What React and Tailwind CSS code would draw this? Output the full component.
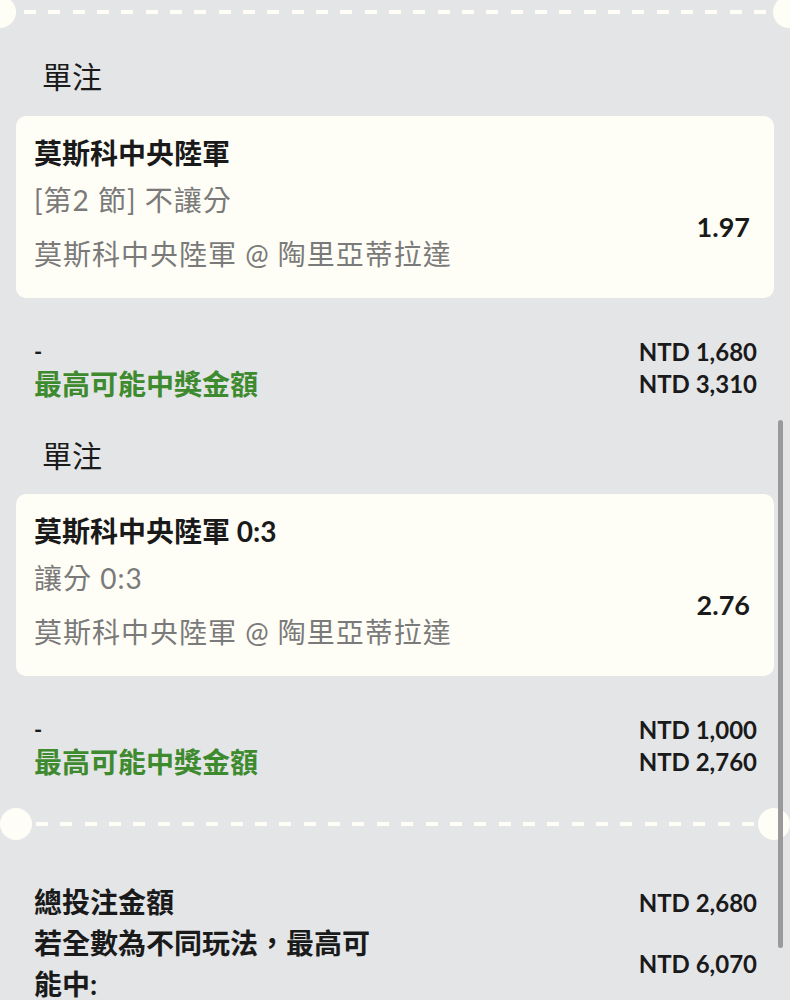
import React from "react";

function Dashes({ count }) {
  return (
    <div className="flex w-full justify-between">
      {Array.from({ length: count }).map((_, i) => (
        <span key={i} className="block h-[4px] w-[12px] bg-[#fffef6]" />
      ))}
    </div>
  );
}

function Card({ title, line2, line3, odds }) {
  return (
    <div className="mx-4 h-[182px] rounded-[10px] bg-[#fffef6] pl-[18px] pr-[24px] pt-[19px]">
      <div className="text-[28px] font-bold leading-[36px] text-[#1a1a1a]">{title}</div>
      <div className="mt-[11px] flex items-center justify-between">
        <div className="flex flex-col text-[28px] leading-[36px] tracking-[1px] text-[#7a7a7a]">
          <div>{line2}</div>
          <div className="mt-[18px]">{line3}</div>
        </div>
        <div className="text-[27px] font-bold text-[#1a1a1a]">{odds}</div>
      </div>
    </div>
  );
}

function Summary({ stake, win }) {
  return (
    <div className="mt-[38px] flex justify-between pl-[34px] pr-[33px]">
      <div className="flex flex-col">
        <div className="h-[32px] text-[22px] font-bold leading-[32px] text-[#1a1a1a]">-</div>
        <div className="h-[32px] text-[28px] font-bold leading-[32px] text-[#3e8a2e]">最高可能中獎金額</div>
      </div>
      <div className="flex flex-col items-end text-[24px] font-bold text-[#1a1a1a]">
        <div className="leading-[32px]">{stake}</div>
        <div className="leading-[32px]">{win}</div>
      </div>
    </div>
  );
}

function Heading() {
  return <div className="pl-[42px] text-[30px] leading-[40px] text-[#1a1a1a]">單注</div>;
}

export default function App() {
  return (
    <div className="relative h-[1000px] w-full overflow-hidden bg-[#e4e5e7] font-['Lato','Noto_Sans_CJK_TC',sans-serif]">
      {/* top separator */}
      <div className="relative flex h-[24px] items-center pl-[24px] pr-[24px]">
        <span className="absolute left-[-16px] top-[-4px] h-[32px] w-[32px] rounded-full bg-[#fffef6]" />
        <span className="absolute left-[773px] top-[-4px] h-[32px] w-[32px] rounded-full bg-[#fffef6]" />
        <Dashes count={31} />
      </div>

      <div className="mt-[32px]">
        <Heading />
      </div>
      <div className="mt-[20px]">
        <Card title="莫斯科中央陸軍" line2="[第2 節] 不讓分" line3="莫斯科中央陸軍 @ 陶里亞蒂拉達" odds="1.97" />
      </div>
      <Summary stake="NTD 1,680" win="NTD 3,310" />

      <div className="mt-[35px]">
        <Heading />
      </div>
      <div className="mt-[19px]">
        <Card title="莫斯科中央陸軍 0:3" line2="讓分 0:3" line3="莫斯科中央陸軍 @ 陶里亞蒂拉達" odds="2.76" />
      </div>
      <Summary stake="NTD 1,000" win="NTD 2,760" />

      {/* bottom separator */}
      <div className="mt-[30px] flex h-[32px] items-center">
        <span className="h-[32px] w-[32px] shrink-0 rounded-full bg-[#fffef6]" />
        <div className="flex-1 px-[4px]">
          <Dashes count={30} />
        </div>
        <span className="h-[32px] w-[32px] shrink-0 rounded-full bg-[#fffef6]" />
      </div>

      {/* totals */}
      <div className="mt-[42px] flex flex-col pl-[34px] pr-[33px] text-[#1a1a1a]">
        <div className="flex items-center justify-between">
          <div className="text-[28px] font-bold leading-[41px]">總投注金額</div>
          <div className="text-[24px] font-bold">NTD 2,680</div>
        </div>
        <div className="flex items-center justify-between">
          <div className="w-[350px] text-[28px] font-bold leading-[41px]">若全數為不同玩法，最高可能中:</div>
          <div className="text-[24px] font-bold">NTD 6,070</div>
        </div>
      </div>

      {/* scrollbar */}
      <div className="absolute left-[778px] top-[420px] h-[528px] w-[5px] rounded-full bg-[#9a9a9a]" />
    </div>
  );
}
